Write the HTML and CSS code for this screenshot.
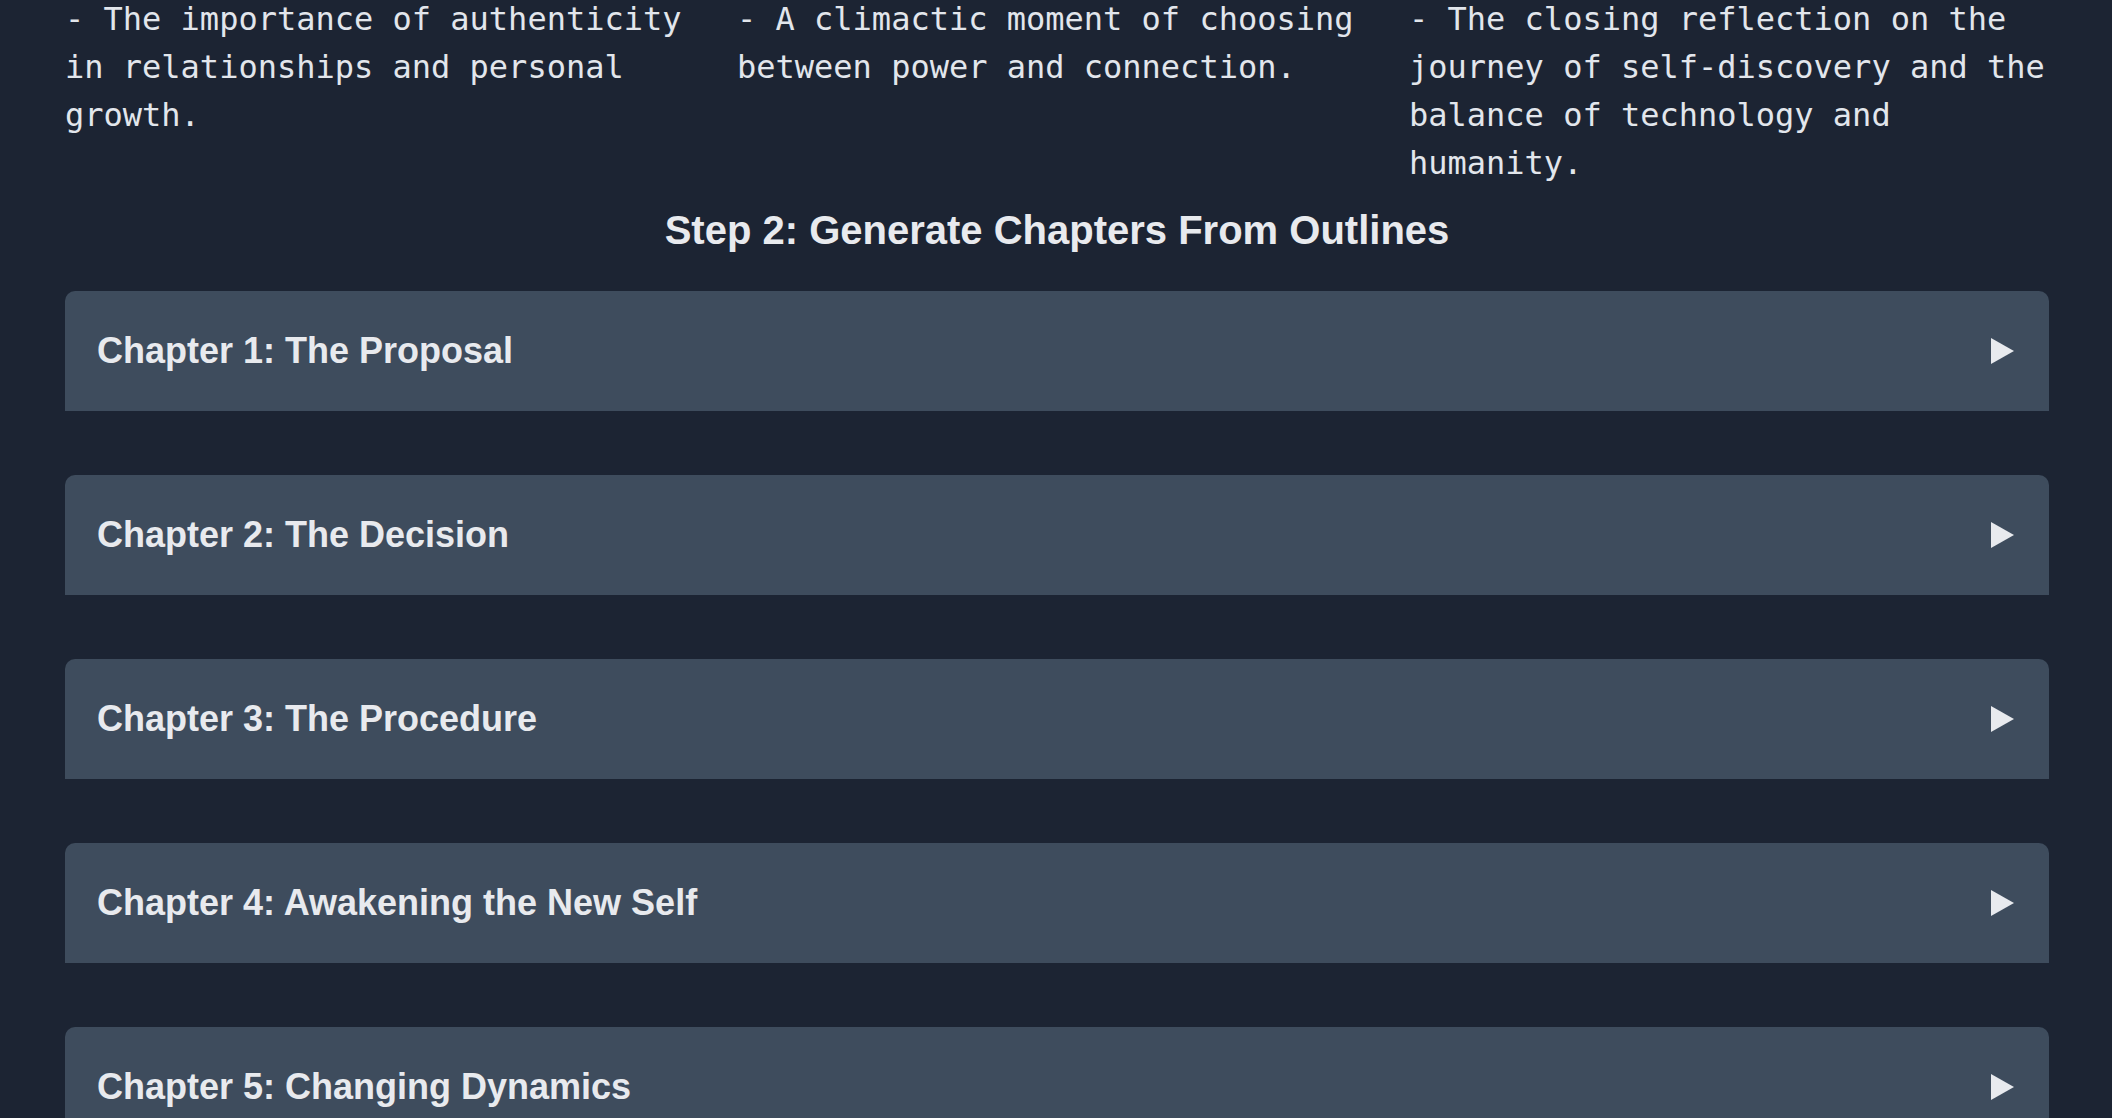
FILE: index.html
```html
<!DOCTYPE html>
<html lang="en">
<head>
<meta charset="utf-8">
<title>Generate Chapters</title>
<link rel="stylesheet" href="styles.css">
</head>
<body>
<main class="page">
  <section class="outlines">
    <div class="outline-col"><p class="outline-text">- The importance of authenticity in relationships and personal growth.</p></div>
    <div class="outline-col"><p class="outline-text">- A climactic moment of choosing between power and connection.</p></div>
    <div class="outline-col"><p class="outline-text">- The closing reflection on the journey of self-discovery and the balance of technology and humanity.</p></div>
  </section>

  <h2 class="step-title">Step 2: Generate Chapters From Outlines</h2>

  <section class="chapters">
    <div class="chapter">
      <h3 class="chapter-title">Chapter 1: The Proposal</h3>
      <svg class="chevron" viewBox="0 0 26 26" width="26" height="26" aria-hidden="true"><polygon points="0,0 23,13 0,26"/></svg>
    </div>
    <div class="chapter">
      <h3 class="chapter-title">Chapter 2: The Decision</h3>
      <svg class="chevron" viewBox="0 0 26 26" width="26" height="26" aria-hidden="true"><polygon points="0,0 23,13 0,26"/></svg>
    </div>
    <div class="chapter">
      <h3 class="chapter-title">Chapter 3: The Procedure</h3>
      <svg class="chevron" viewBox="0 0 26 26" width="26" height="26" aria-hidden="true"><polygon points="0,0 23,13 0,26"/></svg>
    </div>
    <div class="chapter">
      <h3 class="chapter-title">Chapter 4: Awakening the New Self</h3>
      <svg class="chevron" viewBox="0 0 26 26" width="26" height="26" aria-hidden="true"><polygon points="0,0 23,13 0,26"/></svg>
    </div>
    <div class="chapter">
      <h3 class="chapter-title">Chapter 5: Changing Dynamics</h3>
      <svg class="chevron" viewBox="0 0 26 26" width="26" height="26" aria-hidden="true"><polygon points="0,0 23,13 0,26"/></svg>
    </div>
  </section>
</main>
</body>
</html>
```

FILE: styles.css
```css
html, body {
  margin: 0;
  padding: 0;
  background: #1c2433;
  overflow: hidden;
}

body {
  color: #e5e7eb;
  font-family: "Liberation Sans", Arial, sans-serif;
}

.page {
  padding: 0 63px 0 65px;
  margin-top: -5px;
}

.outlines {
  display: grid;
  grid-template-columns: repeat(3, 1fr);
  gap: 32px;
  align-items: start;
}

.outline-col {
  min-width: 0;
}

.outline-text {
  margin: 0;
  font-family: "DejaVu Sans Mono", "Liberation Mono", monospace;
  font-size: 32px;
  line-height: 48px;
  color: #e2e6ec;
  white-space: pre-wrap;
}

.step-title {
  margin: 13px 0 31px;
  text-align: center;
  font-size: 40px;
  line-height: 60px;
  font-weight: 700;
  color: #e8eaee;
}

.chapters {
  display: flex;
  flex-direction: column;
  gap: 64px;
}

.chapter {
  display: flex;
  align-items: center;
  justify-content: space-between;
  background: #3e4c5d;
  border-radius: 10px 10px 0 0;
  padding: 32px;
}

.chapter-title {
  margin: 0;
  font-size: 36px;
  line-height: 56px;
  font-weight: 700;
  color: #e8eaee;
}

.chevron {
  display: block;
  fill: #e8eaee;
  flex: none;
}
```
